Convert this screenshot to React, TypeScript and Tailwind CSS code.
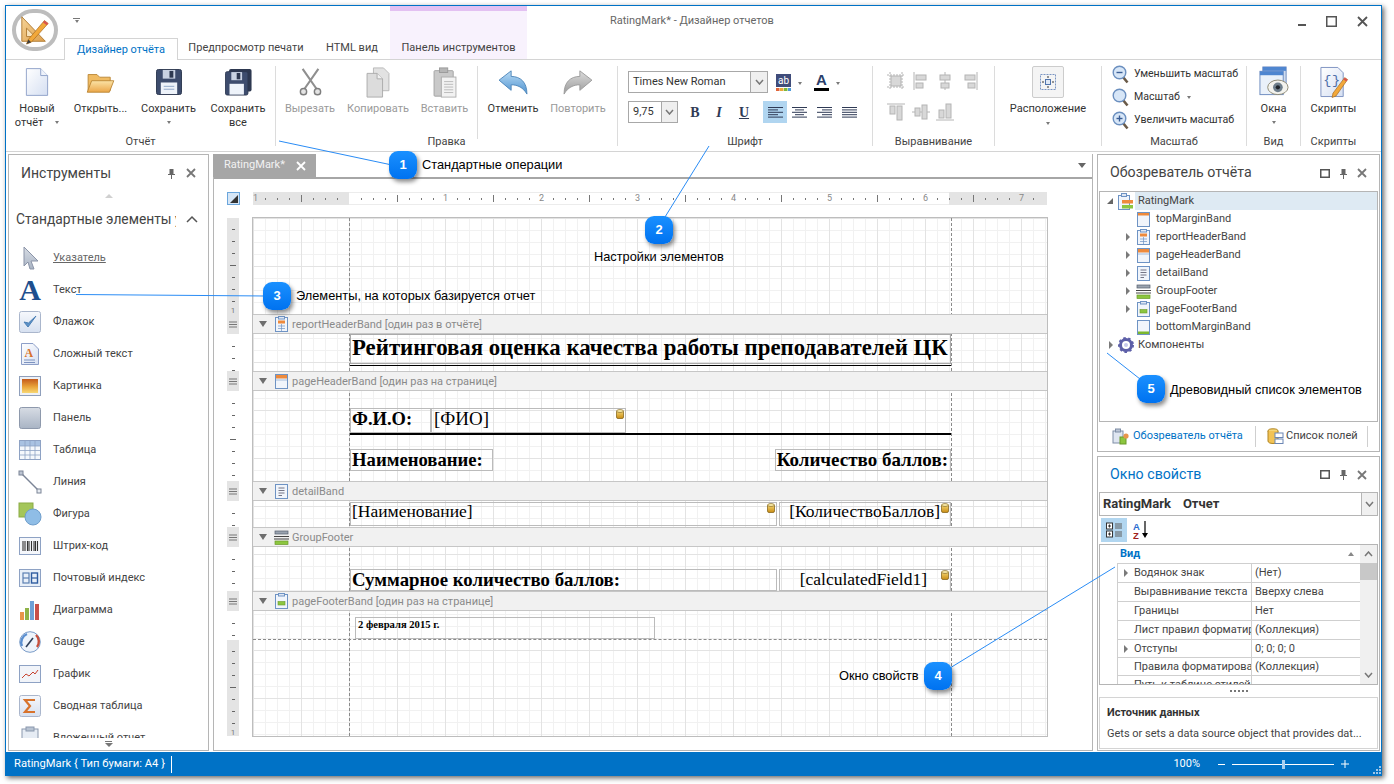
import React from "react";

type SP = { w: number; h: number; vb?: string; children: React.ReactNode };
const S = ({ w, h, vb, children }: SP) => (
  <svg width={w} height={h} viewBox={vb ?? `0 0 ${w} ${h}`} className="shrink-0">
    {children}
  </svg>
);

const Defs = () => (
  <svg width="0" height="0" className="absolute">
    <defs>
      <linearGradient id="gDoc" x1="0" y1="0" x2="1" y2="1"><stop offset="0" stopColor="#ffffff" /><stop offset="1" stopColor="#d5dff2" /></linearGradient>
      <linearGradient id="gFold" x1="0" y1="0" x2="0" y2="1"><stop offset="0" stopColor="#fbe3a6" /><stop offset="1" stopColor="#eba648" /></linearGradient>
      <linearGradient id="gOr" x1="0" y1="0" x2="1" y2="1"><stop offset="0" stopColor="#f6d498" /><stop offset="1" stopColor="#dd9f4c" /></linearGradient>
      <linearGradient id="gUndo" x1="0" y1="0" x2="0" y2="1"><stop offset="0" stopColor="#b9dcf6" /><stop offset="1" stopColor="#4f92cf" /></linearGradient>
      <linearGradient id="gGrey" x1="0" y1="0" x2="0" y2="1"><stop offset="0" stopColor="#dcdcdc" /><stop offset="1" stopColor="#9a9a9a" /></linearGradient>
      <linearGradient id="gPanel" x1="0" y1="0" x2="0" y2="1"><stop offset="0" stopColor="#d7dce4" /><stop offset="1" stopColor="#a9b4c4" /></linearGradient>
      <linearGradient id="gPic" x1="0" y1="0" x2="0" y2="1"><stop offset="0" stopColor="#c45a1c" /><stop offset="0.55" stopColor="#e9a33a" /><stop offset="1" stopColor="#f7d874" /></linearGradient>
      <linearGradient id="gSoft" x1="0" y1="0" x2="0" y2="1"><stop offset="0" stopColor="#f6f8fc" /><stop offset="1" stopColor="#d6e0f0" /></linearGradient>
      <linearGradient id="gDb" x1="0" y1="0" x2="0" y2="1"><stop offset="0" stopColor="#f8dc78" /><stop offset="1" stopColor="#c98c14" /></linearGradient>
    </defs>
  </svg>
);

const Logo = () => (
  <S w={32} h={32} vb="0 0 34 34">
    <polygon points="3,3 3,29 28,29" fill="url(#gOr)" stroke="#b07c34" />
    <polygon points="8,15 8,24 17,24" fill="#f7e3bd" stroke="#b07c34" />
    <polygon points="27,7 31,10 13,30 8,32 10,27" fill="#f2a83a" stroke="#a5681c" strokeWidth="0.7" />
    <polygon points="27,7 31,10 29.5,12 25.5,9" fill="#d9534f" />
    <polygon points="10,27 13,30 8,32" fill="#3d3d3d" />
  </S>
);

const IDoc = () => (
  <S w={24} h={30} vb="0 0 26 32">
    <path d="M1.5 1.5H17L24.5 9V30.5H1.5Z" fill="url(#gDoc)" stroke="#8d9fc8" />
    <path d="M17 1.5V9H24.5" fill="#eef2fa" stroke="#8d9fc8" />
  </S>
);
const IFolder = () => (
  <S w={31} h={23} vb="0 0 32 26">
    <path d="M2 4H12L15 7H27V22H2Z" fill="#f0bb62" stroke="#b98533" />
    <path d="M1 24L6 11H31L26 24Z" fill="url(#gFold)" stroke="#b98533" />
  </S>
);
const ISave = () => (
  <S w={26} h={26} vb="0 0 27 27">
    <rect x="0.5" y="0.5" width="26" height="26" rx="2" fill="#3d4c6d" stroke="#2d3850" />
    <rect x="7" y="1" width="13" height="9" fill="#c9d2e2" />
    <rect x="14" y="2" width="4" height="7" fill="#2d3850" />
    <rect x="5" y="14" width="17" height="12" fill="#eef3fa" />
    <path d="M8 18H19M8 21H19" stroke="#8fa7c8" />
  </S>
);
const ISaveBody = () => (
  <>
    <rect x="0.5" y="0.5" width="25" height="26" rx="2" fill="#3d4c6d" stroke="#2d3850" />
    <rect x="7" y="1" width="12" height="9" fill="#c9d2e2" />
    <rect x="13" y="2" width="4" height="7" fill="#2d3850" />
    <rect x="5" y="14" width="16" height="12" fill="#eef3fa" />
  </>
);
const ISaveAll = () => (
  <S w={27} h={28} vb="0 0 30 30">
    <rect x="4.5" y="0.5" width="25" height="25" rx="2" fill="#2d3850" />
    <g transform="translate(0,3)"><ISaveBody /></g>
  </S>
);
const IScissors = () => (
  <S w={25} h={28} vb="0 0 28 32">
    <path d="M7 24L23 1M21 24L5 1" stroke="#8f8f8f" strokeWidth="2.4" fill="none" />
    <circle cx="6" cy="27" r="3.6" fill="#e4e4e4" stroke="#7e7e7e" strokeWidth="1.6" />
    <circle cx="22" cy="27" r="3.6" fill="#e4e4e4" stroke="#7e7e7e" strokeWidth="1.6" />
  </S>
);
const ICopy = () => (
  <S w={24} h={31} vb="0 0 26 34">
    <path d="M8 1H19L25 7V26H8Z" fill="#e2e2e2" stroke="#b5b5b5" />
    <path d="M1 7H12L18 13V33H1Z" fill="#dcdcdc" stroke="#a9a9a9" />
    <path d="M12 7V13H18" fill="#f1f1f1" stroke="#a9a9a9" />
  </S>
);
const IPaste = () => (
  <S w={24} h={31} vb="0 0 26 34">
    <rect x="1" y="4" width="21" height="28" rx="1" fill="#c9c9c9" stroke="#a0a0a0" />
    <rect x="7" y="1" width="9" height="5" fill="#b5b5b5" stroke="#999" />
    <rect x="9" y="11" width="16" height="22" fill="#f2f2f2" stroke="#adadad" />
    <path d="M12 16H22M12 19H22M12 22H22M12 25H22M12 28H22" stroke="#b8b8b8" />
  </S>
);
const IUndo = () => (
  <S w={32} h={26} vb="0 0 32 28">
    <path d="M1 12L14 2V8C24 8 31 14 31 27C27 20 21 17 14 17V23Z" fill="url(#gUndo)" stroke="#4d86ba" />
  </S>
);
const IRedo = () => (
  <S w={32} h={26} vb="0 0 32 28">
    <path d="M31 12L18 2V8C8 8 1 14 1 27C5 20 11 17 18 17V23Z" fill="url(#gGrey)" stroke="#9a9a9a" />
  </S>
);
const Arrow = () => <span className="inline-block w-0 h-0 border-x-[2.5px] border-x-transparent border-t-[3px] border-t-[#7a7a7a]" />;

const LB = ({ w, icon, l1, l2, muted, arrow, sep }: { w: string; icon: React.ReactNode; l1: string; l2?: string; muted?: boolean; arrow?: boolean; sep?: boolean }) => (
  <div className={`${w} flex flex-col items-center ${muted ? "text-[#9a9a9a]" : "text-[#333]"} ${sep ? "border-r border-[#dcdcdc]" : ""}`}>
    <div className="h-[32px] mb-[4px] flex items-center justify-center">{icon}</div>
    <div className="h-[14px] leading-[14px] whitespace-nowrap">{l1}</div>
    {(l2 || arrow) && (
      <div className="h-[13px] leading-[13px] whitespace-nowrap flex items-center">
        {l2 && <span>{l2}</span>}
        {arrow && <span className={`${l2 ? "ml-[12px]" : ""} flex items-center`}><Arrow /></span>}
      </div>
    )}
  </div>
);

const Group = ({ w, label, children, last }: { w: string; label?: string; children: React.ReactNode; last?: boolean }) => (
  <div className={`${w} h-[80px] mt-[6px] flex flex-col shrink-0 ${last ? "" : "border-r border-[#dcdcdc]"}`}>
    <div className="h-[73px] flex shrink-0">{children}</div>
    <div className="h-[7px] shrink-0 flex items-center justify-center text-[#444] whitespace-nowrap">{label}</div>
  </div>
);

const Combo = ({ w, text, arrowW }: { w: string; text: string; arrowW: string }) => (
  <div className={`${w} h-[22px] border border-[#a8a8a8] flex items-center shrink-0`}>
    <span className="flex-1 pl-[4px] text-[#333] whitespace-nowrap">{text}</span>
    <span className={`${arrowW} h-full bg-[#efefef] border-l border-[#a8a8a8] flex items-center justify-center`}>
      <S w={9} h={6}><path d="M1 1L4.5 5L8 1" fill="none" stroke="#777" strokeWidth="1.5" /></S>
    </span>
  </div>
);

const AlignI = ({ m }: { m: "l" | "c" | "r" | "j" }) => {
  const rows = m === "l" ? [[0, 15], [0, 10], [0, 15], [0, 10], [0, 15]] : m === "c" ? [[0, 15], [3, 9], [0, 15], [3, 9], [0, 15]] : m === "r" ? [[0, 15], [5, 10], [0, 15], [5, 10], [0, 15]] : [[0, 15], [0, 15], [0, 15], [0, 15], [0, 15]];
  return (
    <S w={15} h={11}>
      {rows.map((r, i) => <rect key={i} x={r[0]} y={i * 2.4} width={r[1]} height={1} fill="#2f3a55" />)}
    </S>
  );
};

const AG = ({ d }: { d: React.ReactNode }) => <span className="w-[24.5px] flex justify-center shrink-0"><S w={18} h={18}>{d}</S></span>;
const g1 = "#b4b4b4", g2 = "#d8d8d8";
const Lens = ({ k }: { k: "-" | "+" | "o" }) => (
  <S w={17} h={19}>
    <path d="M11 12L15.5 17.5" stroke="#6a5a48" strokeWidth="2.6" />
    <circle cx="7.5" cy="7.5" r="6.3" fill="#d7e6f7" stroke="#6b8fbf" strokeWidth="1.4" />
    {k !== "o" && <path d="M4.5 7.5H10.5" stroke="#3a5d95" strokeWidth="1.4" />}
    {k === "+" && <path d="M7.5 4.5V10.5" stroke="#3a5d95" strokeWidth="1.4" />}
  </S>
);

const IWin = () => (
  <S w={30} h={32} vb="0 0 30 33">
    <rect x="3.5" y="1" width="24" height="24" fill="#cfdcf0" stroke="#6e8cc0" />
    <rect x="3.5" y="1" width="24" height="4" fill="#4f86d0" />
    <rect x="0.5" y="5.5" width="24" height="24" fill="#eaf1fa" stroke="#6e8cc0" />
    <rect x="0.5" y="5.5" width="24" height="4" fill="#4f86d0" />
    <ellipse cx="19" cy="22" rx="10.5" ry="7.5" fill="#f3f3ee" stroke="#8e8a76" />
    <circle cx="19" cy="22" r="5" fill="#6f7f8c" />
    <circle cx="19" cy="22" r="2.2" fill="#20262c" />
  </S>
);
const IScript = () => (
  <S w={30} h={32} vb="0 0 30 33">
    <path d="M1.5 1.5H19L24.5 7V31.5H1.5Z" fill="url(#gDoc)" stroke="#7f94c2" />
    <text x="4" y="19" fontSize="14" fill="#4d6ea8" fontFamily="'Liberation Mono',monospace">{"{"}</text>
    <text x="13" y="19" fontSize="14" fill="#4d6ea8" fontFamily="'Liberation Mono',monospace">{"}"}</text>
    <path d="M26 12L29 14L17 31L13 32.5L14 28Z" fill="#f2a83a" stroke="#a5681c" strokeWidth="0.7" />
    <path d="M26 12L29 14L27.8 16L24.6 14Z" fill="#d9534f" />
  </S>
);

const Tool = ({ icon, text, u }: { icon: React.ReactNode; text: string; u?: boolean }) => (
  <div className="h-[32px] flex items-center shrink-0">
    <span className="w-[24px] h-[24px] ml-[9px] flex items-center justify-center shrink-0">{icon}</span>
    <span className={`ml-[11px] whitespace-nowrap ${u ? "underline text-[#666]" : "text-[#444]"}`}>{text}</span>
  </div>
);

const frame = "#8ea2c4";
const T = {
  arrow: <S w={18} h={24}><path d="M3 1L17 15H10L13 23L9 23L7 16L3 20Z" fill="url(#gPanel)" stroke="#8b94a8" /></S>,
  a: <span className="font-['Liberation_Serif',serif] font-bold text-[30px] leading-[24px] text-[#1e4f8e]">A</span>,
  check: <S w={22} h={22}><rect x=".5" y=".5" width="21" height="21" rx="2" fill="url(#gSoft)" stroke="#aab6cc" /><path d="M5 11L9 16L17 5L9.5 12Z" fill="#5d92c8" stroke="#4a7fb5" /></S>,
  rich: <S w={20} h={24}><path d="M1.5 1.5H13L18.5 7V22.5H1.5Z" fill="url(#gDoc)" stroke="#8d9fc8" /><text x="4.5" y="15" fontSize="12" fontWeight="700" fill="#d8712c" fontFamily="'Liberation Serif',serif">A</text><path d="M4 18H15M4 20.5H15" stroke="#7d93c0" /></S>,
  pic: <S w={22} h={20}><rect x=".5" y=".5" width="21" height="19" fill="#eef1f6" stroke="#8f9fbb" /><rect x="3" y="3" width="16" height="14" fill="url(#gPic)" /></S>,
  panel: <S w={22} h={22}><rect x=".5" y=".5" width="21" height="21" rx="2" fill="url(#gPanel)" stroke="#8e99ac" /></S>,
  table: <S w={22} h={20}><rect x=".5" y=".5" width="21" height="19" fill="#f5f8fc" stroke={frame} /><rect x="1" y="1" width="20" height="5" fill="#a9c2e2" /><path d="M1 6H21M1 10.5H21M1 15H21M6 1V19M11 1V19M16 1V19" stroke={frame} strokeWidth=".8" /></S>,
  line: <S w={24} h={24}><path d="M3 3L21 21" stroke="#7b8496" strokeWidth="1.4" /><rect x="1" y="1" width="4" height="4" fill="#bcc4d2" stroke="#7b8496" /><rect x="19" y="19" width="4" height="4" fill="#e8ecf2" stroke="#7b8496" /></S>,
  shape: <S w={24} h={24}><rect x="1" y="1" width="14" height="14" fill="#a4c65a" stroke="#8bab44" /><circle cx="15" cy="15" r="8" fill="#8fbde6" stroke="#6f9ecb" /></S>,
  bar: <S w={22} h={18}><rect x=".5" y=".5" width="21" height="17" fill="#f5f7fb" stroke={frame} /><path d="M4 4V14M6 4V14M8.5 4V14M10 4V14M12.5 4V14M15 4V14M16.5 4V14M18.5 4V14" stroke="#333" strokeWidth="1.1" /></S>,
  zip: <S w={22} h={18}><rect x=".5" y=".5" width="21" height="17" fill="#e8eff8" stroke={frame} /><rect x="4" y="4" width="6" height="10" fill="none" stroke="#5b7fb2" strokeWidth="1.2" /><path d="M4 9H10" stroke="#5b7fb2" strokeWidth="1.2" /><rect x="12.5" y="4" width="6" height="10" fill="none" stroke="#2f5da0" strokeWidth="1.4" /><path d="M12.5 9H18.5" stroke="#2f5da0" strokeWidth="1.2" /></S>,
  chart: <S w={22} h={20}><rect x="1" y="12" width="4" height="8" fill="#e8954a" /><rect x="6" y="8" width="4" height="12" fill="#8fb348" /><rect x="11" y="1" width="4" height="19" fill="#6fa0d6" /><rect x="16" y="4" width="4" height="16" fill="#c8504a" /></S>,
  gauge: <S w={22} h={22}><circle cx="11" cy="11" r="10.3" fill="#eef4fb" stroke="#7b9cc8" /><path d="M3 15A9 9 0 0 1 8 3" fill="none" stroke="#5b8fd0" strokeWidth="2.4" /><path d="M17 4A9 9 0 0 1 18 16" fill="none" stroke="#c8503c" strokeWidth="2.4" /><path d="M7 16L14 7" stroke="#2d3e58" strokeWidth="1.6" /></S>,
  graph: <S w={22} h={18}><rect x=".5" y=".5" width="21" height="17" fill="#f1f4f9" stroke={frame} /><path d="M3 13L7 9L10 11L14 7L16 9L19 5" fill="none" stroke="#c8432f" /></S>,
  sigma: <S w={22} h={22}><rect x=".5" y=".5" width="21" height="21" rx="2" fill="url(#gSoft)" stroke="#aab6cc" /><path d="M16 5H6L11 11L6 17H16" fill="none" stroke="#d8732c" strokeWidth="2.2" /></S>,
  sub: <S w={18} h={24}><rect x="1" y="3" width="16" height="20" fill="#e6ecf4" stroke="#8a98ad" /><rect x="5" y="1" width="8" height="4" fill="#b8c3d2" stroke="#8a98ad" /></S>,
};

const tools: [React.ReactNode, string][] = [
  [T.a, "Текст"], [T.check, "Флажок"], [T.rich, "Сложный текст"], [T.pic, "Картинка"], [T.panel, "Панель"], [T.table, "Таблица"], [T.line, "Линия"], [T.shape, "Фигура"], [T.bar, "Штрих-код"], [T.zip, "Почтовый индекс"], [T.chart, "Диаграмма"], [T.gauge, "Gauge"], [T.graph, "График"], [T.sigma, "Сводная таблица"], [T.sub, "Вложенный отчет"],
];

const Pin = () => <S w={9} h={11}><path d="M2.5 1H6.5V6H8V7H5V11H4V7H1V6H2.5Z" fill="#666" /></S>;
const Close = ({ c = "#777" }: { c?: string }) => <S w={10} h={10}><path d="M1 1L9 9M9 1L1 9" stroke={c} strokeWidth="1.8" /></S>;
const Maxi = () => <S w={10} h={9}><rect x=".75" y=".75" width="8.5" height="7.5" fill="none" stroke="#555" strokeWidth="1.5" /></S>;

const BandIcon = ({ k }: { k: "rh" | "ph" | "d" | "gf" | "pf" | "bm" | "tm" }) => {
  const page = "#6e93c4";
  if (k === "gf") return <S w={15} h={15}><rect x="1" y="1" width="13" height="3" fill="#9aa3b0" stroke="#555f6e" strokeWidth=".7" /><path d="M0 6.5H15" stroke="#444" /><path d="M0 9H15" stroke="#444" /><rect x="1" y="11" width="13" height="3.5" fill="#8cc63f" stroke="#6a9a2a" strokeWidth=".7" /></S>;
  const clip = k === "rh" || k === "pf";
  return (
    <S w={13} h={16}>
      <rect x=".5" y="1.5" width="12" height="14" fill="#f1f5fb" stroke={page} />
      {clip && <rect x="3.5" y=".5" width="6" height="2.5" fill="#dfe7f3" stroke={page} />}
      {k === "rh" && <><rect x="3" y="4.5" width="7" height="3" fill="#ee8a3c" /><path d="M3 10H10M3 12.5H10M6.5 8V15" stroke={page} strokeWidth=".7" /></>}
      {k === "ph" && <rect x="1" y="2" width="11" height="3.5" fill="#ee8a3c" />}
      {k === "tm" && <rect x="1" y="2" width="11" height="2.5" fill="#ee8a3c" />}
      {k === "bm" && <rect x="1" y="12.5" width="11" height="2.5" fill="#7cb82f" />}
      {k === "ph" && <path d="M1 7H12" stroke={page} strokeWidth=".6" />}
      {k === "d" && <path d="M3.5 5H9.5M3.5 7.5H9.5M3.5 10H9.5M3.5 12.5H7" stroke="#667" strokeWidth=".9" />}
      {k === "pf" && <rect x="3" y="8.5" width="7" height="3.5" fill="#8cc63f" stroke="#6a9a2a" strokeWidth=".6" />}
    </S>
  );
};

const Band = ({ k, text }: { k: "rh" | "ph" | "d" | "gf" | "pf"; text: string }) => (
  <div className="relative z-10 h-[20px] bg-[#f1f1f1] border-y border-[#c6c6c6] flex items-center pl-[6px] shrink-0">
    <span className="w-0 h-0 border-x-[4px] border-x-transparent border-t-[6px] border-t-[#6e6e6e]" />
    <span className="ml-[6px] w-[16px] flex justify-center"><BandIcon k={k} /></span>
    <span className="ml-[3px] pt-[2px] text-[11px] text-[#8a8a8a] whitespace-nowrap">{text}</span>
  </div>
);

const Db = ({ cls }: { cls: string }) => (
  <span className={`absolute ${cls}`}>
    <S w={8} h={10}><rect x=".5" y="1.5" width="7" height="8" rx="1.5" fill="url(#gDb)" stroke="#7a5a10" strokeWidth=".7" /><ellipse cx="4" cy="2" rx="3.4" ry="1.5" fill="#f6e6a5" stroke="#7a5a10" strokeWidth=".6" /></S>
  </span>
);

const serif = "font-['Liberation_Serif',serif] text-black whitespace-nowrap";

const Tick = ({ long }: { long?: boolean }) => (
  <div className="h-[12px] flex items-end justify-center shrink-0">
    <span className={`${long ? "w-[6px]" : "w-[3px]"} h-px bg-[#666]`} />
  </div>
);
const VSeg = ({ h, grey, n, longAt, last }: { h: string; grey?: boolean; n: number; longAt?: number; last?: boolean }) => (
  <div className={`${h} ${grey ? "bg-[#e4e4e4]" : "bg-white"} overflow-hidden shrink-0`}>
    {!grey && <div className="h-px" />}
    {Array.from({ length: n }).map((_, i) => <Tick key={i} long={i === longAt} />)}
    {last && <div className="mt-[5px] text-[8px] leading-[8px] text-center text-[#777]">1</div>}
  </div>
);
const VHandle = () => (
  <div className="h-[20px] bg-[#e4e4e4] flex items-center justify-center shrink-0">
    <S w={8} h={7}><path d="M0 1H8M0 3.5H8M0 6H8" stroke="#777" /></S>
  </div>
);

const treeKids: ["tm" | "rh" | "ph" | "d" | "gf" | "pf" | "bm", string, boolean][] = [
  ["tm", "topMarginBand", false], ["rh", "reportHeaderBand", true], ["ph", "pageHeaderBand", true], ["d", "detailBand", true], ["gf", "GroupFooter", true], ["pf", "pageFooterBand", true], ["bm", "bottomMarginBand", false],
];
const Exp = () => <span className="inline-block w-0 h-0 border-y-[4px] border-y-transparent border-l-[4px] border-l-[#7a7a7a]" />;

const props: [string, string, boolean, string][] = [
  ["Водянок знак", "(Нет)", true, "h-[19px]"], ["Выравнивание текста", "Вверху слева", false, "h-[19px]"], ["Границы", "Нет", false, "h-[19px]"], ["Лист правил форматирования", "(Коллекция)", false, "h-[19px]"], ["Отступы", "0; 0; 0; 0", true, "h-[18px]"], ["Правила форматирования", "(Коллекция)", false, "h-[18px]"], ["Путь к таблице стилей", "", false, "h-[19px]"],
];

const Badge = ({ n, cls }: { n: number; cls: string }) => (
  <div className={`absolute ${cls} z-30 w-[28px] h-[28px] rounded-[9px] bg-gradient-to-b from-[#1a90ff] to-[#0072f0] shadow-[2px_3px_4px_rgba(0,0,0,0.45)] flex items-center justify-center text-white text-[13px] font-bold font-['Liberation_Sans',sans-serif]`}>{n}</div>
);
const Note = ({ t, cls }: { t: string; cls: string }) => (
  <div className={`absolute ${cls} z-30 text-[12.8px] leading-[14px] text-black whitespace-nowrap font-['Liberation_Sans',sans-serif]`}>{t}</div>
);

export default function App() {
  return (
    <div className="relative w-[1394px] h-[784px] bg-white pt-[5px] pl-[5px] pr-[12px] pb-[8px] overflow-hidden text-[11px] text-[#444] font-['Roboto',sans-serif]">
      <Defs />
      <div className="h-full flex flex-col bg-white border-x border-t border-[#0072c6] shadow-[2px_2px_5px_rgba(0,0,0,0.6)]">
        {/* header */}
        <div className="relative h-[53px] flex items-end shrink-0">
          <div className="absolute left-[6px] top-[3px] w-[46px] h-[42px] rounded-full border-[4px] border-[#bdbdbd] flex items-center justify-center bg-white">
            <Logo />
          </div>
          <span className="absolute left-[67px] top-[12px] flex flex-col items-center gap-[1px]">
            <span className="w-[7px] h-px bg-[#777]" />
            <Arrow />
          </span>
          <div className="w-[58px] shrink-0" />
          <div className="w-[114px] h-[22px] pt-[1px] border-x border-t border-[#d4d4d4] text-[#0072c6] flex items-center justify-center shrink-0 relative top-px bg-white z-10 whitespace-nowrap">Дизайнер отчёта</div>
          <div className="w-[136px] h-[22px] pt-[1px] flex items-center justify-center whitespace-nowrap shrink-0">Предпросмотр печати</div>
          <div className="w-[76px] h-[22px] pt-[1px] flex items-center justify-center whitespace-nowrap shrink-0">HTML вид</div>
          <div className="w-[137px] self-stretch bg-[#f8f2fd] border-t-[5px] border-[#e3c1f2] flex flex-col justify-end shrink-0">
            <div className="h-[22px] pt-[1px] flex items-center justify-center whitespace-nowrap">Панель инструментов</div>
          </div>
          <div className="flex-1 self-stretch flex items-start">
            <div className="pl-[83px] pt-[7px] text-[#666] whitespace-nowrap">RatingMark* - Дизайнер отчетов</div>
            <div className="ml-auto flex items-center gap-[20px] pt-[10px] pr-[13px]">
              <span className="w-[8px] h-[2px] bg-[#555] mt-[7px]" />
              <S w={11} h={11}><rect x=".75" y=".75" width="9.5" height="9.5" fill="none" stroke="#555" strokeWidth="1.5" /></S>
              <S w={11} h={11}><path d="M1 1L10 10M10 1L1 10" stroke="#555" strokeWidth="1.8" /></S>
            </div>
          </div>
        </div>

        {/* ribbon */}
        <div className="h-[93px] border-y border-[#d4d4d4] flex shrink-0">
          <Group w="w-[270px]" label="Отчёт">
            <LB w="w-[62px]" icon={<IDoc />} l1="Новый" l2="отчёт" arrow />
            <LB w="w-[65px]" icon={<IFolder />} l1="Открыть..." />
            <LB w="w-[71px]" icon={<ISave />} l1="Сохранить" arrow />
            <LB w="w-[68px]" icon={<ISaveAll />} l1="Сохранить" l2="все" />
          </Group>
          <Group w="w-[342px]" label="Правка">
            <LB w="w-[68px]" icon={<IScissors />} l1="Вырезать" muted />
            <LB w="w-[68px]" icon={<ICopy />} l1="Копировать" muted />
            <LB w="w-[66px]" icon={<IPaste />} l1="Вставить" muted sep />
            <LB w="w-[70px]" icon={<IUndo />} l1="Отменить" />
            <LB w="w-[60px]" icon={<IRedo />} l1="Повторить" muted />
          </Group>
          <Group w="w-[255px]" label="Шрифт">
            <div className="pl-[10px] pt-[5px] flex flex-col gap-[8px]">
              <div className="flex items-center h-[22px]">
                <Combo w="w-[140px]" text="Times New Roman" arrowW="w-[17px]" />
                <span className="ml-[8px]">
                  <S w={16} h={17}><rect x="0" y="0" width="15" height="13" fill="#3f4c7a" /><text x="2" y="10" fontSize="10" fill="#fff" fontFamily="'Roboto',sans-serif">ab</text><rect x="0" y="14" width="3.5" height="3" fill="#e0653a" /><rect x="4" y="14" width="3.5" height="3" fill="#e8a93a" /><rect x="8" y="14" width="3.5" height="3" fill="#7cb83a" /><rect x="12" y="14" width="3" height="3" fill="#4f9ad8" /></S>
                </span>
                <span className="ml-[6px]"><Arrow /></span>
                <span className="ml-[12px] w-[15px] flex flex-col items-center">
                  <span className="font-['Liberation_Sans',sans-serif] font-bold text-[15px] leading-[14px] text-[#2b3f6b]">A</span>
                  <span className="w-[15px] h-[3px] bg-black mt-[1px]" />
                </span>
                <span className="ml-[7px]"><Arrow /></span>
              </div>
              <div className="flex items-center h-[22px]">
                <Combo w="w-[50px]" text="9,75" arrowW="w-[16px]" />
                <span className="w-[24px] ml-[5px] text-center font-['Liberation_Serif',serif] font-bold text-[14px] text-[#2f3a55]">B</span>
                <span className="w-[24px] text-center font-['Liberation_Serif',serif] font-bold italic text-[14px] text-[#2f3a55]">I</span>
                <span className="w-[26px] text-center font-['Liberation_Serif',serif] font-bold underline text-[14px] text-[#2f3a55]">U</span>
                <span className="w-[24px] h-[22px] ml-[6px] bg-[#b0d5f0] flex items-center justify-center"><AlignI m="l" /></span>
                <span className="w-[25px] flex justify-center"><AlignI m="c" /></span>
                <span className="w-[25px] flex justify-center"><AlignI m="r" /></span>
                <span className="w-[25px] flex justify-center"><AlignI m="j" /></span>
              </div>
            </div>
          </Group>
          <Group w="w-[122px]" label="Выравнивание">
            <div className="pl-[11px] pt-[6px] flex flex-col gap-[13px]">
              <div className="flex">
                <AG d={<><rect x="4" y="4" width="10" height="10" fill={g2} stroke={g1} /><path d="M0 3H18M0 15H18M3 0V18M15 0V18" stroke={g1} strokeDasharray="2 1" /></>} />
                <AG d={<><path d="M2 0V18" stroke={g1} /><rect x="4" y="3" width="10" height="5" fill={g2} stroke={g1} /><rect x="4" y="11" width="7" height="5" fill={g2} stroke={g1} /></>} />
                <AG d={<><path d="M9 0V18" stroke={g1} /><rect x="4" y="3" width="10" height="5" fill={g2} stroke={g1} /><rect x="5" y="11" width="8" height="5" fill={g2} stroke={g1} /></>} />
                <AG d={<><path d="M16 0V18" stroke={g1} /><rect x="4" y="3" width="10" height="5" fill={g2} stroke={g1} /><rect x="7" y="11" width="7" height="5" fill={g2} stroke={g1} /></>} />
              </div>
              <div className="flex">
                <AG d={<><path d="M0 1H18" stroke={g1} /><rect x="3" y="3" width="5" height="8" fill={g2} stroke={g1} /><rect x="10" y="3" width="5" height="14" fill={g2} stroke={g1} /></>} />
                <AG d={<><path d="M0 9H18" stroke={g1} /><rect x="3" y="5" width="5" height="8" fill={g2} stroke={g1} /><rect x="10" y="2" width="5" height="14" fill={g2} stroke={g1} /></>} />
                <AG d={<><path d="M0 17H18" stroke={g1} /><rect x="3" y="7" width="5" height="8" fill={g2} stroke={g1} /><rect x="10" y="1" width="5" height="14" fill={g2} stroke={g1} /></>} />
              </div>
            </div>
          </Group>
          <Group w="w-[107px]">
            <div className="w-full flex flex-col items-center text-[#333]">
              <div className="w-[32px] h-[32px] bg-[#f4f4f4] border border-[#cccccc] rounded-[2px] flex items-center justify-center">
                <S w={16} h={16}><rect x=".5" y=".5" width="15" height="15" fill="none" stroke="#7a95c2" strokeDasharray="2 1" /><rect x="5.5" y="5.5" width="5" height="5" fill="#dfe8f5" stroke="#4f74ad" /><path d="M8 2V4M8 12V14M2 8H4M12 8H14" stroke="#333" /></S>
              </div>
              <div className="mt-[4px] h-[14px] leading-[14px]">Расположение</div>
              <div className="mt-[3px] flex items-center h-[8px]"><Arrow /></div>
            </div>
          </Group>
          <Group w="w-[145px]" label="Масштаб">
            <div className="pl-[10px] flex flex-col gap-[5px] -mt-[1px] text-[10.6px] text-[#333] whitespace-nowrap">
              <div className="flex items-center gap-[5px] h-[18px]"><Lens k="-" />Уменьшить масштаб</div>
              <div className="flex items-center gap-[5px] h-[18px]"><Lens k="o" />Масштаб<span className="flex ml-[2px]"><Arrow /></span></div>
              <div className="flex items-center gap-[5px] h-[18px]"><Lens k="+" />Увеличить масштаб</div>
            </div>
          </Group>
          <Group w="w-[54px]" label="Вид">
            <LB w="w-full" icon={<IWin />} l1="Окна" arrow />
          </Group>
          <Group w="w-[65px]" label="Скрипты" last>
            <LB w="w-full" icon={<IScript />} l1="Скрипты" />
          </Group>
        </div>

        {/* main */}
        <div className="flex-1 min-h-0 flex gap-[4px] pl-[2px] pr-[1px] pt-[2px] pb-[1px]">
          {/* left */}
          <div className="w-[201px] border border-[#b5b5b5] flex flex-col shrink-0">
            <div className="h-[36px] flex items-center pl-[12px] pr-[12px] shrink-0">
              <span className="flex-1 text-[14px] text-[#444]">Инструменты</span>
              <Pin /><span className="ml-[10px]"><Close /></span>
            </div>
            <div className="h-[10px] flex items-center justify-center shrink-0"><span className="w-0 h-0 border-x-[4px] border-x-transparent border-b-[4px] border-b-[#d0d0d0]" /></div>
            <div className="h-[36px] flex items-center pl-[7px] shrink-0">
              <span className="w-[160px] overflow-hidden whitespace-nowrap text-[13.8px] text-[#444]">Стандартные элементы управления</span>
              <span className="ml-[10px]"><S w={12} h={8}><path d="M1 7L6 2L11 7" fill="none" stroke="#555" strokeWidth="1.5" /></S></span>
            </div>
            <div className="h-[5px] shrink-0" />
            <div className="flex-1 min-h-0 overflow-hidden">
              <Tool icon={T.arrow} text="Указатель" u />
              {tools.map(([ic, t]) => <Tool key={t} icon={ic} text={t} />)}
            </div>
            <div className="h-[12px] flex flex-col items-center justify-center shrink-0">
              <span className="w-[7px] h-px bg-[#777]" />
              <span className="w-0 h-0 mt-px border-x-[4px] border-x-transparent border-t-[4px] border-t-[#777]" />
            </div>
          </div>

          {/* center */}
          <div className="flex-1 min-w-0 border-x border-b border-[#b5b5b5] flex flex-col">
            <div className="h-[23px] flex items-stretch shrink-0">
              <div className="w-[103px] bg-[#a6a6a6] flex items-center pl-[11px] text-[#f2f2f2] -ml-px">
                <span className="flex-1">RatingMark*</span>
                <span className="mr-[10px]"><Close c="#fff" /></span>
              </div>
              <div className="flex-1 flex items-center justify-end pr-[6px]"><span className="w-0 h-0 border-x-[4px] border-x-transparent border-t-[5px] border-t-[#666]" /></div>
            </div>
            <div className="h-[2px] bg-[#a6a6a6] shrink-0" />
            <div className="flex-1 min-h-0 pl-[13px] pt-[13px]">
              <div className="flex items-start h-[13px]">
                <div className="w-[13px] h-[13px] bg-[#d6e6f6] border border-[#6ba6dc] flex items-center justify-center shrink-0">
                  <span className="w-0 h-0 border-l-[8px] border-l-transparent border-b-[8px] border-b-[#333]" />
                </div>
                <div className="ml-[13px] w-[794px] h-[13px] flex overflow-hidden">
                  {Array.from({ length: 67 }).map((_, i) => {
                    const grey = i < 8 || i >= 58;
                    const num = i % 8 === 0 && i !== 8 ? (i === 0 ? 1 : i / 8 - 1) : null;
                    return (
                      <div key={i} className={`w-[12px] h-[13px] flex items-center shrink-0 ${grey ? "bg-[#e4e4e4]" : "bg-white border-y border-[#ececec]"}`}>
                        {num !== null ? <span className={`text-[9px] leading-none text-[#888] ${i === 0 ? "" : "-ml-[2px]"}`}>{num}</span> : i === 8 || i === 66 ? null : i % 4 === 0 ? <span className="w-px h-[7px] bg-[#777]" /> : <span className="w-px h-[2px] bg-[#777]" />}
                      </div>
                    );
                  })}
                </div>
              </div>
              <div className="flex items-start mt-[12px]">
                <div className="w-[12px] mt-px flex flex-col shrink-0">
                  <VSeg h="h-[96px]" grey n={7} longAt={3} last />
                  <VHandle />
                  <VSeg h="h-[37px]" n={3} />
                  <VHandle />
                  <VSeg h="h-[90px]" n={7} longAt={3} />
                  <VHandle />
                  <VSeg h="h-[26px]" n={2} />
                  <VHandle />
                  <VSeg h="h-[44px]" n={3} />
                  <VHandle />
                  <VSeg h="h-[29px]" n={2} />
                  <VSeg h="h-[96px]" grey n={7} longAt={3} last />
                </div>
                <div className="ml-[13px] w-[796px] h-[520px] border border-[#bdbdbd] relative flex flex-col bg-white bg-[linear-gradient(to_right,#e3e3e3_1px,transparent_1px),linear-gradient(to_bottom,#e3e3e3_1px,transparent_1px),linear-gradient(to_right,#f1f1f1_1px,transparent_1px),linear-gradient(to_bottom,#f1f1f1_1px,transparent_1px)] [background-size:48px_48px,48px_48px,12px_12px,12px_12px]">
                  <div className="absolute left-[96px] top-0 bottom-0 border-l border-dashed border-[#8a8a8a]" />
                  <div className="absolute left-[698px] top-0 bottom-0 border-l border-dashed border-[#8a8a8a]" />
                  <div className="h-[96px] shrink-0" />
                  <Band k="rh" text="reportHeaderBand [один раз в отчёте]" />
                  <div className="relative h-[37px] shrink-0">
                    <div className="absolute left-[97px] top-0 w-[601px] h-[30px] border border-[#aaaaaa] overflow-hidden">
                      <span className={`${serif} pl-[1px] font-bold text-[22.8px] leading-[26px]`}>Рейтинговая оценка качества работы преподавателей ЦК</span>
                    </div>
                    <div className="absolute left-[97px] top-[31px] w-[601px] h-px bg-black" />
                  </div>
                  <Band k="ph" text="pageHeaderBand [один раз на странице]" />
                  <div className="relative h-[90px] shrink-0">
                    <div className={`${serif} absolute left-[97px] top-[17px] w-[81px] h-[25px] border border-[#bbbbbb] pl-[1px] font-bold text-[18.5px] leading-[20px]`}>Ф.И.О:</div>
                    <div className={`${serif} absolute left-[178px] top-[17px] w-[195px] h-[25px] border border-[#bbbbbb] pl-[2px] text-[19px] leading-[19px]`}>[ФИО]</div>
                    <Db cls="left-[363px] top-[18px]" />
                    <div className="absolute left-[97px] top-[42px] w-[601px] h-[2px] bg-black" />
                    <div className={`${serif} absolute left-[97px] top-[58px] w-[143px] h-[22px] border border-[#bbbbbb] pl-[1px] font-bold text-[18.7px] leading-[20px]`}>Наименование:</div>
                    <div className={`${serif} absolute left-[522px] top-[58px] w-[176px] h-[22px] border border-[#bbbbbb] pr-[2px] text-right font-bold text-[19px] leading-[20px]`}>Количество баллов:</div>
                  </div>
                  <Band k="d" text="detailBand" />
                  <div className="relative h-[26px] shrink-0">
                    <div className={`${serif} absolute left-[97px] top-[1px] w-[427px] h-[24px] border border-[#bbbbbb] pl-[1px] text-[17.5px] leading-[17px]`}>[Наименование]</div>
                    <Db cls="left-[514px] top-[2px]" />
                    <div className={`${serif} absolute left-[526px] top-[1px] w-[172px] h-[24px] border border-[#bbbbbb] pr-[10px] text-right text-[17.5px] leading-[17px]`}>[КоличествоБаллов]</div>
                    <Db cls="left-[688px] top-[2px]" />
                  </div>
                  <Band k="gf" text="GroupFooter" />
                  <div className="relative h-[44px] shrink-0">
                    <div className={`${serif} absolute left-[97px] top-[22px] w-[427px] h-[22px] border border-[#bbbbbb] pl-[1px] font-bold text-[18.8px] leading-[20px]`}>Суммарное количество баллов:</div>
                    <div className={`${serif} absolute left-[526px] top-[22px] w-[172px] h-[22px] border border-[#bbbbbb] pr-[23px] text-right text-[17.5px] leading-[18px]`}>[calculatedField1]</div>
                    <Db cls="left-[688px] top-[23px]" />
                  </div>
                  <Band k="pf" text="pageFooterBand [один раз на странице]" />
                  <div className="relative h-[29px] shrink-0 border-b border-dashed border-[#8a8a8a]">
                    <div className={`${serif} absolute left-[102px] top-[6px] w-[300px] h-[22px] border border-[#bbbbbb] pl-[2px] pt-[1px] font-bold text-[10.6px] leading-[12px]`}>2 февраля 2015 г.</div>
                  </div>
                </div>
              </div>
            </div>
          </div>

          {/* right */}
          <div className="w-[283px] flex flex-col gap-[4px] shrink-0">
            <div className="h-[298px] border border-[#b5b5b5] flex flex-col shrink-0">
              <div className="h-[36px] flex items-center pl-[12px] pr-[12px] shrink-0">
                <span className="flex-1 text-[14.2px] text-[#444]">Обозреватель отчёта</span>
                <Maxi /><span className="ml-[9px]"><Pin /></span><span className="ml-[9px]"><Close /></span>
              </div>
              <div className="h-[231px] mx-px border border-[#b5b5b5] shrink-0 text-[#444]">
                <div className="h-[18px] flex items-center">
                  <span className="ml-[7px] w-0 h-0 border-l-[6px] border-l-transparent border-b-[6px] border-b-[#666]" />
                  <span className="ml-[5px]"><BandIconRoot /></span>
                  <span className="ml-[1px] pl-[3px] flex-1 h-full bg-[#deeaf3] flex items-center">RatingMark</span>
                </div>
                {treeKids.map(([k, t, e]) => (
                  <div key={t} className="h-[18px] flex items-center">
                    <span className="w-[32px] flex justify-end pr-[2px]">{e && <Exp />}</span>
                    <span className="w-[15px] ml-[4px] flex justify-center"><BandIcon k={k} /></span>
                    <span className="ml-[5px]">{t}</span>
                  </div>
                ))}
                <div className="h-[18px] flex items-center">
                  <span className="ml-[9px] flex"><Exp /></span>
                  <span className="ml-[5px]">
                    <S w={16} h={16}>
                      <circle cx="8" cy="8" r="5.5" fill="none" stroke="#5d5fa8" strokeWidth="3" />
                      <circle cx="8" cy="8" r="7" fill="none" stroke="#5d5fa8" strokeWidth="2" strokeDasharray="2.5 2.5" />
                      <circle cx="8" cy="8" r="2" fill="#c6c8ec" />
                    </S>
                  </span>
                  <span className="ml-[4px]">Компоненты</span>
                </div>
              </div>
              <div className="flex-1 flex items-center">
                <span className="ml-[14px] flex items-center w-[144px] border-r border-[#cfcfcf] h-[21px]">
                  <S w={17} h={17}><rect x="1" y="3" width="10" height="12" fill="#dfe6f1" stroke="#7f8ea6" /><rect x="3.5" y="1" width="5" height="3" fill="#bcc6d6" stroke="#7f8ea6" /><rect x="8" y="9" width="6" height="7" fill="#8cc63f" stroke="#6a9a2a" /><circle cx="14" cy="8" r="2.6" fill="#e8954a" /></S>
                  <span className="ml-[4px] text-[#0072c6] whitespace-nowrap">Обозреватель отчёта</span>
                </span>
                <span className="ml-[11px] flex items-center w-[100px] h-[21px]">
                  <S w={17} h={17}><ellipse cx="6" cy="3" rx="5" ry="2.2" fill="#f5d678" stroke="#b08420" /><path d="M1 3V13C1 14.5 3 15.5 6 15.5S11 14.5 11 13V3" fill="#f2c355" stroke="#b08420" /><rect x="8" y="5" width="8" height="4.5" fill="#fff" stroke="#6b86b4" /><rect x="8" y="11" width="8" height="4.5" fill="#fff" stroke="#6b86b4" /></S>
                  <span className="ml-[2px] whitespace-nowrap">Список полей</span>
                </span>
                <span className="w-px h-[21px] bg-[#cfcfcf]" />
              </div>
            </div>
            <div className="flex-1 min-h-0 border border-[#b5b5b5] flex flex-col">
              <div className="h-[35px] flex items-center pl-[12px] pr-[12px] shrink-0">
                <span className="flex-1 text-[14.2px] text-[#0072c6]">Окно свойств</span>
                <Maxi /><span className="ml-[9px]"><Pin /></span><span className="ml-[9px]"><Close /></span>
              </div>
              <div className="h-[24px] mx-px border border-[#b5b5b5] flex items-center shrink-0">
                <span className="flex-1 pl-[3px] font-bold text-[13px] text-[#333] flex gap-[12px]"><span>RatingMark</span><span>Отчет</span></span>
                <span className="w-[16px] h-full bg-[#f0f0f0] border-l border-[#b5b5b5] flex items-center justify-center">
                  <S w={9} h={6}><path d="M1 1L4.5 5L8 1" fill="none" stroke="#777" strokeWidth="1.5" /></S>
                </span>
              </div>
              <div className="h-[28px] pl-[3px] pt-[2px] flex items-start shrink-0">
                <span className="w-[26px] h-[24px] bg-[#b1d6f0] flex items-center justify-center">
                  <S w={17} h={16}><rect x=".5" y="1" width="6" height="6" fill="#fff" stroke="#333" /><rect x=".5" y="9" width="6" height="6" fill="#fff" stroke="#333" /><path d="M2 4H5M2 12H5M3.5 2.5V5.5M3.5 10.5V13.5" stroke="#333" /><path d="M9 2H16M9 4H16M9 6H16M9 10H16M9 12H16M9 14H16" stroke="#5c5c5c" /></S>
                </span>
                <span className="ml-[6px] mt-[3px]">
                  <S w={16} h={18}><text x="0" y="8.5" fontSize="9.5" fontWeight="700" fill="#2a6cd0" fontFamily="'Liberation Sans',sans-serif">A</text><text x="0" y="17.5" fontSize="9.5" fontWeight="700" fill="#a0201c" fontFamily="'Liberation Sans',sans-serif">Z</text><path d="M12 0V13" stroke="#000" strokeWidth="1.2" /><path d="M9 12H15L12 17Z" fill="#000" /></S>
                </span>
              </div>
              <div className="h-[141px] mx-px border border-[#b5b5b5] flex overflow-hidden shrink-0">
                <div className="flex-1 min-w-0 flex flex-col">
                  <div className="h-[18px] flex items-center justify-between pl-[20px] pr-[6px] font-bold text-[#0072c6] shrink-0">
                    <span>Вид</span>
                    <span className="w-0 h-0 border-x-[3.5px] border-x-transparent border-b-[4px] border-b-[#888]" />
                  </div>
                  {props.map(([n, v, e, h]) => (
                    <div key={n} className={`${h} ml-[17px] flex border-t border-l border-[#cfcfcf] shrink-0`}>
                      <span className="w-[134px] border-r border-[#cfcfcf] flex items-center overflow-hidden whitespace-nowrap shrink-0">
                        <span className="w-[16px] flex justify-center shrink-0">{e && <Exp />}</span>
                        <span className="pt-[1px]">{n}</span>
                      </span>
                      <span className="pl-[3px] pt-[1px] flex items-center whitespace-nowrap">{v}</span>
                    </div>
                  ))}
                </div>
                <div className="w-[17px] bg-[#f0f0f0] flex flex-col items-center shrink-0">
                  <div className="h-[18px] flex items-center"><S w={9} h={6}><path d="M1 5L4.5 1L8 5" fill="none" stroke="#777" strokeWidth="1.5" /></S></div>
                  <div className="w-full h-[17px] bg-[#c8c8c8]" />
                  <div className="flex-1" />
                  <div className="h-[18px] flex items-center"><S w={9} h={6}><path d="M1 1L4.5 5L8 1" fill="none" stroke="#777" strokeWidth="1.5" /></S></div>
                </div>
              </div>
              <div className="h-[12px] flex items-center justify-center gap-[2px] shrink-0">
                {[0, 1, 2, 3, 4].map((i) => <span key={i} className="w-[2px] h-[2px] bg-[#777]" />)}
              </div>
              <div className="flex-1 mx-px mb-[1px] border border-[#d4d4d4] pl-[7px] flex flex-col justify-center gap-[7px]">
                <div className="font-bold text-[#333] leading-[14px]">Источник данных</div>
                <div className="whitespace-nowrap leading-[14px]">Gets or sets a data source object that provides dat...</div>
              </div>
            </div>
          </div>
        </div>

        {/* status */}
        <div className="h-[24px] bg-[#0072c6] flex items-center text-white shrink-0">
          <span className="pl-[8px] text-[11.2px] w-[166px] whitespace-nowrap border-r border-white h-[17px] flex items-center">RatingMark {"{"} Тип бумаги: A4 {"}"}</span>
          <span className="ml-auto">100%</span>
          <span className="ml-[18px] w-[7px] h-px bg-white" />
          <span className="ml-[7px] w-[102px] h-px bg-white flex items-center justify-center"><span className="w-[3px] h-[9px] bg-[#a9d0f0]" /></span>
          <span className="ml-[7px]"><S w={8} h={8}><path d="M0 4H8M4 0V8" stroke="#fff" /></S></span>
          <span className="ml-[24px] mr-0 self-end mb-[2px]">
            <S w={8} h={8}><g fill="#9cc6ea"><rect x="6" y="0" width="2" height="2" /><rect x="3" y="3" width="2" height="2" /><rect x="6" y="3" width="2" height="2" /><rect x="0" y="6" width="2" height="2" /><rect x="3" y="6" width="2" height="2" /><rect x="6" y="6" width="2" height="2" /></g></S>
          </span>
        </div>
      </div>

      {/* callouts */}
      <svg width="1394" height="784" className="absolute left-0 top-0 z-20 pointer-events-none" fill="none" stroke="#2a8cf5">
        <path d="M279 141L392 165" />
        <path d="M709 146L665 217" />
        <path d="M76 294.5L265 296" />
        <path d="M1115 567L950 668" />
        <path d="M1107 353L1140 379" />
      </svg>
      <Badge n={1} cls="left-[389px] top-[151px]" />
      <Note t="Стандартные операции" cls="left-[422px] top-[158px]" />
      <Badge n={2} cls="left-[645px] top-[216px]" />
      <Note t="Настройки элементов" cls="left-[594px] top-[250px]" />
      <Badge n={3} cls="left-[263px] top-[282px]" />
      <Note t="Элементы, на которых базируется отчет" cls="left-[296px] top-[289px]" />
      <Badge n={4} cls="left-[924px] top-[662px]" />
      <Note t="Окно свойств" cls="left-[839px] top-[669px]" />
      <Badge n={5} cls="left-[1137px] top-[375px]" />
      <Note t="Древовидный список элементов" cls="left-[1170px] top-[383px]" />
    </div>
  );
}

const BandIconRoot = () => (
  <S w={16} h={17}>
    <rect x=".5" y="2.5" width="11" height="14" fill="#f1f5fb" stroke="#6e93c4" />
    <rect x="3.5" y=".5" width="5" height="3" fill="#dfe7f3" stroke="#6e93c4" />
    <rect x="4" y="7" width="11" height="3.5" fill="#ee8a3c" />
    <rect x="4" y="12" width="11" height="3.5" fill="#8cc63f" />
  </S>
);
